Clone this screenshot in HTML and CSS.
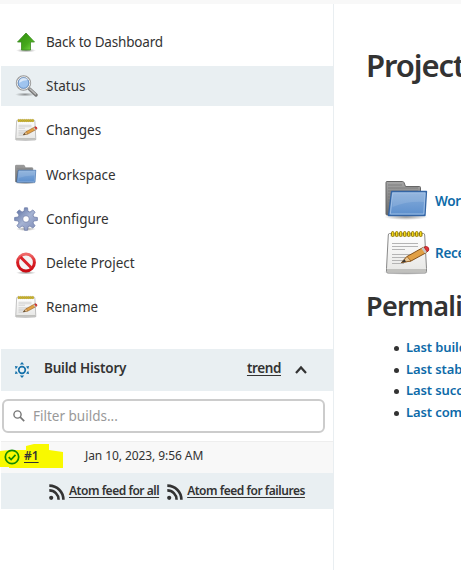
FILE: index.html
```html
<!DOCTYPE html>
<html lang="en">
<head>
<meta charset="utf-8">
<title>Project</title>
<link rel="stylesheet" href="styles.css">
</head>
<body>
<svg class="defs" width="0" height="0" aria-hidden="true">
  <defs>
    <linearGradient id="green" x1="0" y1="0" x2="1" y2="1"><stop offset="0" stop-color="#2f8c0c"/><stop offset=".6" stop-color="#46a91c"/><stop offset="1" stop-color="#7ee04a"/></linearGradient>
    <linearGradient id="blue" x1="0" y1="0" x2="0" y2="1"><stop offset="0" stop-color="#88aedb"/><stop offset="1" stop-color="#5c8fcd"/></linearGradient>
    <linearGradient id="gray" x1="0" y1="0" x2="0" y2="1"><stop offset="0" stop-color="#a5a5a5"/><stop offset="1" stop-color="#686868"/></linearGradient>
    <linearGradient id="paper" x1="0" y1="0" x2="0" y2="1"><stop offset="0" stop-color="#fff"/><stop offset="1" stop-color="#e6e6e4"/></linearGradient>
    <linearGradient id="steel" x1="0" y1="0" x2="1" y2="1"><stop offset="0" stop-color="#53689c"/><stop offset=".5" stop-color="#a5b3d3"/><stop offset="1" stop-color="#7b88b4"/></linearGradient>
    <linearGradient id="red" x1="0" y1="0" x2="0" y2="1"><stop offset="0" stop-color="#ef6a6a"/><stop offset=".5" stop-color="#d81e24"/><stop offset="1" stop-color="#ca0c14"/></linearGradient>
    <radialGradient id="shadow"><stop offset="0" stop-color="#000" stop-opacity=".4"/><stop offset="1" stop-color="#000" stop-opacity="0"/></radialGradient>
    <symbol id="folder" viewBox="0 1 48 48">
      <ellipse cx="23" cy="41" rx="22" ry="3" fill="url(#shadow)"/>
      <path d="M3 6.500q0-1 1-1h15.500q1 0 1.500 1l1.500 4h14q1 0 1 1V39H4q-1 0-1-1z" fill="url(#gray)" stroke="#666"/>
      <path d="M5 9h14M5 12h30M5 15h30M5 18h4M5 21h4M5 24h4M5 27h3M5 30h3" stroke="#777" stroke-width=".8"/>
      <path d="M8.500 15.500h35L42 39.500H5.500z" fill="url(#blue)" stroke="#3465a4" stroke-width="1.300" stroke-linejoin="round"/>
      <path d="M9.800 17h32.200L40.800 38H7.300z" fill="none" stroke="#a9c6e8" stroke-width=".8"/>
      <path d="M10 17.500h31.500L41 26Q24 25 9.500 31z" fill="#fff" opacity=".12"/>
    </symbol>
    <symbol id="notepad" viewBox="0 1 48 48">
      <ellipse cx="23" cy="44" rx="23" ry="3" fill="url(#shadow)"/>
      <path d="M6.500 5.500h34Q41.500 5.500 41.700 7L43.500 40.500v3q0 1.500-1.500 1.500h-37Q3.500 45 3.500 43.500v-3L5.300 7Q5.400 5.500 6.500 5.500z" fill="url(#paper)" stroke="#888"/>
      <path d="M4 41h39v2.500q0 1-1 1H5q-1 0-1-1z" fill="#c0c0bd"/>
      <path d="M7.500 5.500h32v3h-32z" fill="#d0c78f"/>
      <path d="M9 15.500h26M9 18.500h26M9 21.500h13M9 26.500h23M9 29.500h18M9 32.500h17M9 35.500h12" stroke="#b4b4b4"/>
      <g fill="#f6dd1b" stroke="#8c7100" stroke-width=".9"><rect x="8.500" y="3.500" width="2.400" height="5" rx="1.200"/><rect x="12.500" y="3.500" width="2.400" height="5" rx="1.200"/><rect x="16.500" y="3.500" width="2.400" height="5" rx="1.200"/><rect x="20.500" y="3.500" width="2.400" height="5" rx="1.200"/><rect x="24.500" y="3.500" width="2.400" height="5" rx="1.200"/><rect x="28.500" y="3.500" width="2.400" height="5" rx="1.200"/><rect x="32.500" y="3.500" width="2.400" height="5" rx="1.200"/><rect x="36.500" y="3.500" width="2.400" height="5" rx="1.200"/></g>
      <path d="M18.500 34.500L24 28.500 40 19.500q3-1.500 5 .5 1.500 2.500-1.500 4.500L28 33z" fill="#e1a044" stroke="#85521b"/>
      <path d="M24 28.500l4 4.500-9.500 1.500z" fill="#e9c590" stroke="#85521b" stroke-width=".7"/><path d="M18.500 34.500l3-3.200 1.500 2.500z" fill="#333"/>
      <path d="M39.500 19.800l3.500 5" stroke="#c5c5c5" stroke-width="2.500"/><path d="M41.200 19q2.800-1.300 4.300.7 1.200 2.300-1.200 4.300z" fill="#e2323a" stroke="#a61c25" stroke-width=".7"/>
    </symbol>
    <symbol id="rss" viewBox="0 0 16 16">
      <circle cx="2.200" cy="13.800" r="2.100" fill="#333"/>
      <path d="M.3 6.400a9.300 9.300 0 0 1 9.300 9.300M.3 1.600a14.100 14.100 0 0 1 14.100 14.100" fill="none" stroke="#333" stroke-width="2.600"/>
    </symbol>
  </defs>
</svg>
<div class="topbar"></div>
<div class="page">
  <aside class="sidebar">
    <nav class="tasks">
      <a class="task back"><svg class="task-icon" viewBox="0 0 24 24"><ellipse cx="12" cy="20.500" rx="10" ry="2" fill="url(#shadow)"/><path d="M12 3l8.500 9h-4v8h-9v-8h-4z" fill="url(#green)" stroke="#3b8b20" stroke-width=".8"/></svg><span>Back to Dashboard</span></a>
      <a class="task active"><svg class="task-icon" viewBox="0 0 24 24"><ellipse cx="11" cy="20.500" rx="10" ry="2" fill="url(#shadow)"/><path d="M15.500 15l6.500 6" stroke="#777" stroke-width="3.400" stroke-linecap="round"/><path d="M16 15l5.500 5" stroke="#bbb" stroke-width="1.500" stroke-linecap="round"/><circle cx="9.500" cy="9" r="6.700" fill="#a9ccf3" stroke="#999" stroke-width="2"/><circle cx="9.500" cy="9" r="6.300" fill="none" stroke="#eee" stroke-width="1"/><circle cx="9.500" cy="9" r="5.300" fill="#9fc4ef" stroke="#5f87ba" stroke-width=".8"/><path d="M5 9q0-5 5-5 3 0 4 2-5 0-9 3z" fill="#fff" opacity=".6"/></svg><span>Status</span></a>
      <a class="task"><svg class="task-icon"><use href="#notepad"/></svg><span>Changes</span></a>
      <a class="task"><svg class="task-icon"><use href="#folder"/></svg><span>Workspace</span></a>
      <a class="task"><svg class="task-icon" viewBox="0 0 24 24"><ellipse cx="12" cy="22" rx="10" ry="2" fill="url(#shadow)"/><path fill-rule="evenodd" d="M10.500.8h3l.5 3.500 2 .8 2.800-2.200 2.300 2.300L19 8l.8 2 3.600.5v3l-3.600.5-.8 2 2.100 2.800-2.300 2.300L16 19l-2 .8-.5 3.500h-3L10 19.800 8 19l-2.800 2.100-2.300-2.300L5 16l-.8-2-3.600-.5v-3l3.600-.5L5 8 2.900 5.200l2.300-2.300L8 5.100l2-.8zM12 8.700a3.300 3.300 0 1 0 0 6.600 3.300 3.300 0 0 0 0-6.600z" fill="url(#steel)" stroke="#6877a3" stroke-width=".7"/></svg><span>Configure</span></a>
      <a class="task"><svg class="task-icon" viewBox="0 0 24 24"><ellipse cx="12" cy="21.700" rx="10" ry="1.800" fill="url(#shadow)"/><circle cx="12" cy="11.500" r="8.400" fill="#f4f4f4" stroke="url(#red)" stroke-width="3"/><path d="M6.500 6l11 11" stroke="#d82128" stroke-width="3"/></svg><span>Delete Project</span></a>
      <a class="task"><svg class="task-icon"><use href="#notepad"/></svg><span>Rename</span></a>
    </nav>
    <section class="history">
      <header class="history-head">
        <svg class="sun" viewBox="0 0 16 16"><circle cx="8" cy="8" r="3.300" fill="none" stroke="#1571aa" stroke-width="1.700"/><path d="M8 0l2.200 2.500H5.800zM8 16l2.200-2.500H5.800zM.9 3.900l3.100.6-2.200 2.700zM15.100 3.900L12 4.500l2.200 2.700zM.9 12.100l3.100-.6-2.200-2.700zM15.100 12.100l-3.100-.6 2.200-2.700z" fill="#1571aa"/></svg>
        <span class="history-title">Build History</span>
        <a class="trend">trend</a>
        <svg class="chevron" viewBox="0 0 14 10"><path d="M2 8l5-5.500L12 8" fill="none" stroke="#333" stroke-width="2.200"/></svg>
      </header>
      <div class="filter">
        <svg class="search" viewBox="0 0 12 12"><circle cx="4.500" cy="4.500" r="3.600" fill="none" stroke="#777" stroke-width="1.400"/><path d="M7.200 7.200l4 4" stroke="#777" stroke-width="1.700"/></svg>
        <span>Filter builds...</span>
      </div>
      <div class="build">
        <svg class="marker" viewBox="0 0 64 26"><path d="M0 8L9 7h17V3l8-2h15v6l14 2v16H9v-1H0z" fill="#f9f900"/></svg>
        <svg class="ok" viewBox="0 0 16 16"><circle cx="8" cy="8" r="6.700" fill="none" stroke="#138a00" stroke-width="1.700"/><path d="M4.700 8.200l2.400 2.400 4.400-4.700" fill="none" stroke="#138a00" stroke-width="1.700"/></svg>
        <a class="number">#1</a>
        <span class="date">Jan 10, 2023, 9:56 AM</span>
      </div>
      <footer class="feeds">
        <svg class="rss"><use href="#rss"/></svg><a class="feed all">Atom feed for all</a>
        <svg class="rss"><use href="#rss"/></svg><a class="feed failures">Atom feed for failures</a>
      </footer>
    </section>
  </aside>
  <main class="main">
    <h1>Project</h1>
    <div class="links">
      <a class="big-link"><svg class="big-icon"><use href="#folder"/></svg><span>Workspace</span></a>
      <a class="big-link"><svg class="big-icon"><use href="#notepad"/></svg><span>Recent Changes</span></a>
    </div>
    <h2>Permalinks</h2>
    <ul class="permalinks">
      <li><a>Last build</a></li>
      <li><a>Last stable build</a></li>
      <li><a>Last successful build</a></li>
      <li><a>Last completed build</a></li>
    </ul>
  </main>
</div>
</body>
</html>
```
FILE: styles.css
```css
* { box-sizing: border-box; }
body { margin: 0; height: 570px; overflow: hidden; background: #fff; color: #333; font: 14px/20px "Noto Sans", sans-serif; white-space: nowrap; }
.defs { display: block; }
svg { flex: none; }
.topbar { height: 4px; background: #f8f8f8; }
.page { display: flex; height: 566px; }
.sidebar { flex: none; width: 334px; padding-left: 1px; border-right: 1px solid #e9eef1; }
.tasks { padding-top: 18px; display: grid; gap: 4.200px; }
.task { display: flex; align-items: center; height: 40px; padding-left: 13px; gap: 8px; font-size: 13.500px; }
.task.back { letter-spacing: -.18px; }
.task.active { background: #e9eff2; }
.task-icon { width: 24px; height: 24px; }
.history { margin-top: 21.800px; }
.history-head { display: flex; align-items: center; height: 42px; padding-left: 13px; background: #e9eff2; font-weight: 600; letter-spacing: -.2px; }
.sun { width: 16px; height: 16px; margin-right: 14px; }
.history-title { margin-top: -3px; font-size: 13.500px; }
.trend { margin: -3px 13px 0 auto; font-size: 13.500px; letter-spacing: -.4px; }
.trend, .number, .feed { font-weight: 600; text-decoration: underline; text-underline-offset: 2px; }
.chevron { width: 14px; height: 10px; margin-right: 25px; }
.filter { display: flex; align-items: center; gap: 8px; width: 323px; height: 34px; margin: 8px 0 8px 1px; padding-left: 9px; border: 2px solid #ccc; border-radius: 6px; color: #999; font-size: 13.500px; }
.search { width: 12px; height: 12px; }
.build { position: relative; display: flex; align-items: center; height: 32px; padding-left: 3px; background: #f8f8f8; border-top: 1px solid #eee; font-size: 12px; }
.marker { position: absolute; left: -1px; top: 1px; width: 64px; height: 26px; }
.ok { position: relative; width: 16px; height: 16px; margin-right: 4px; }
.number { position: relative; width: 61px; margin-top: -2px; }
.date { margin-top: -2px; letter-spacing: -.08px; }
.feeds { display: flex; align-items: center; height: 36px; padding-left: 48px; background: #e9eff2; font-size: 12px; letter-spacing: -.47px; }
.rss { width: 16px; height: 16px; margin: 2px 4px 0 0; }
.all { margin-right: 8px; }
.main { flex: 1; min-width: 0; overflow: hidden; padding-left: 32px; }
h1, h2 { margin: 0; font-weight: 600; }
h1 { padding-top: 41px; font-size: 31px; line-height: 40px; letter-spacing: -1.100px; }
.links { margin-top: 92px; padding-left: 17px; display: grid; gap: 4px; }
.big-link { display: flex; align-items: center; gap: 4px; height: 48px; color: #0d6aa8; font-weight: 600; font-size: 13.500px; letter-spacing: -.3px; }
.big-icon { width: 48px; height: 48px; }
h2 { margin-top: 11px; font-size: 27px; line-height: 36px; letter-spacing: -.700px; }
.permalinks { margin: 13px 0 0; padding-left: 40px; line-height: 21.700px; font-size: 13px; font-weight: 600; letter-spacing: -.1px; list-style: none; }
.permalinks li { display: flex; align-items: center; }
.permalinks li::before { content: ""; flex: none; width: 5px; height: 5px; margin: 1px 7px 0 -12px; border-radius: 50%; background: #333; }
.permalinks a { color: #0d6aa8; }
```
